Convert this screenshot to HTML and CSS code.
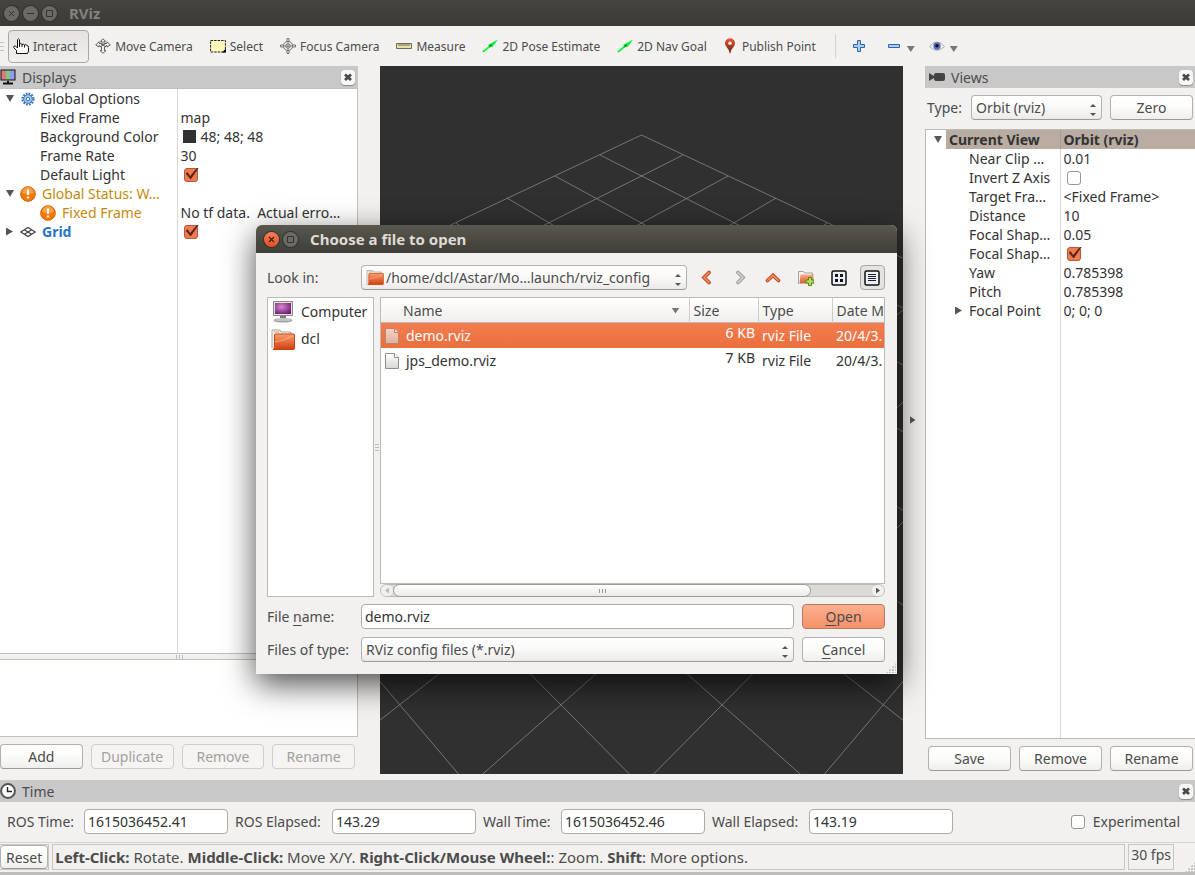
FILE: index.html
```html
<!DOCTYPE html>
<html lang="en">
<head>
<meta charset="utf-8">
<title>RViz</title>
<link rel="stylesheet" href="styles.css">
</head>
<body>
<svg class="defs" aria-hidden="true">
  <defs>
    <linearGradient id="orange" x1="0" y1="0" x2="0" y2="1"><stop offset="0" stop-color="#f8a070"/><stop offset="1" stop-color="#d0400c"/></linearGradient>
    <radialGradient id="purple" cx="40%" cy="35%" r="75%"><stop offset="0" stop-color="#d38ad0"/><stop offset="1" stop-color="#6d1670"/></radialGradient>
    <linearGradient id="pin" x1="0" y1="0" x2="0" y2="1"><stop offset="0" stop-color="#f0553a"/><stop offset="1" stop-color="#5a2208"/></linearGradient>
    <linearGradient id="paper" x1="0" y1="0" x2="0" y2="1"><stop offset="0" stop-color="#ffffff"/><stop offset="1" stop-color="#d6d5d3"/></linearGradient>
    <symbol id="folder" viewBox="0 0 24 22">
      <path d="M1 20V2h8l1 2h10v4" fill="#f6f4f2" stroke="#a8a29c"/>
      <path d="M3 4h5" stroke="#f09050"/>
      <path d="M3.500 7q0-1 1-1h18q1 0 1 1v13.500q0 1-1 1H2q1.500-1 1.500-3z" fill="url(#orange)" stroke="#c8430f"/>
      <path d="M4 14Q12 13 22 8" stroke="#ffc9a0" stroke-opacity=".6" fill="none"/>
    </symbol>
    <symbol id="warn" viewBox="0 0 16 16">
      <circle cx="8" cy="8" r="7.300" fill="#f57900" stroke="#cf5c00"/>
      <path d="M2 7a6 6 0 0 1 12 0q-6 2-12 0z" fill="#fcaf60" opacity=".7"/>
      <path d="M8 3.500v5.500M8 10.500v2" stroke="#fff" stroke-width="2.200"/>
    </symbol>
    <symbol id="file" viewBox="0 0 14 16">
      <path d="M.5.5h9l4 4v11H.5z" fill="url(#paper)" stroke="#92908c"/>
      <path d="M9.500.5v4h4" fill="#fff" stroke="#92908c"/>
    </symbol>
    <symbol id="arrow" viewBox="0 0 16 14"><path d="M.3 12.200L7 7 6 6 16 .5 10.500 8 9 7.500 1.500 13.500z" fill="#00f030"/><path d="M7 7l2-1.500 1 1-2 1.500z" fill="#066b12"/></symbol>
    <symbol id="cross" viewBox="0 0 14 14"><path d="M4 4.500l6 5.500M10 4.500L4 10" stroke="#4a4a46" stroke-width="2.800"/></symbol>
  </defs>
</svg>

<header class="titlebar">
  <button class="win-btn" aria-label="Close"><svg viewBox="0 0 15 15"><path d="M5 5l5 5M10 5l-5 5" stroke="#35342f"/></svg></button>
  <button class="win-btn" aria-label="Minimize"><svg viewBox="0 0 15 15"><path d="M4 7.500h7" stroke="#35342f"/></svg></button>
  <button class="win-btn" aria-label="Maximize"><svg viewBox="0 0 15 15"><path d="M4.500 4.500h6v6h-6z" stroke="#35342f" fill="none"/></svg></button>
  <h1>RViz</h1>
</header>

<nav class="toolbar">
  <span class="grip"></span>
  <button class="tool pressed"><svg viewBox="0 0 16 16"><path d="M3.500 15.500v-3L.7 9.500Q.5 7.500 2.500 8L4.500 10V1.700Q5.500 0 6.500 1.700V6Q8 5 9 6.500 10.500 5.500 11.500 7 13 6 14 7.500q1.500 0 1.500 2V13l-1 2.500z" fill="#fff" stroke="#111"/><path d="M6.500 6v3M9 6.500V9M11.500 7v2.500" stroke="#111"/></svg>Interact</button>
  <button class="tool"><svg viewBox="0 0 16 16"><path d="M8 .8L10.500 3.300H9V6l3-.8V3.700L15.300 7 12 9V7.500L9.500 9v3.500h1.500L8 15.300 5 12.500h1.500V9L4 7.500V9L.7 7 4 3.700v1.500L7 6V3.300H5.500z" fill="#eee" stroke="#555" stroke-width=".9"/><path d="M5 5l6 4M11 5L5 9" stroke="#555"/></svg>Move Camera</button>
  <button class="tool"><svg viewBox="0 0 16 14"><path d="M.6 1.500h14.800v11.500H.6z" fill="#fff7b8" stroke="#222" stroke-dasharray="2.500 1"/><path d="M12 13.500l4-4v4z" fill="#000"/></svg>Select</button>
  <button class="tool"><svg viewBox="0 0 16 16"><g fill="#eee" stroke="#666" stroke-width=".9"><path d="M7 .6h2v3.500H7zM7 12h2v3.500H7zM.6 7H4v2H.6zM12 7h3.500v2H12z"/><circle cx="8" cy="8" r="4.600"/></g><circle cx="8" cy="8" r="2.300" fill="none" stroke="#777"/><path d="M8 3v10M3 8h10" stroke="#777" stroke-width=".9"/></svg>Focus Camera</button>
  <button class="tool"><svg viewBox="0 0 16 16"><path d="M.5 5.500h15v5H.5z" fill="#e8e0a8" stroke="#706c58"/><path d="M3 6v2M5 6v2M7 6v2M9 6v2M11 6v2M13 6v2" stroke="#55513e" stroke-width=".8"/></svg>Measure</button>
  <button class="tool"><svg><use href="#arrow"/></svg>2D Pose Estimate</button>
  <button class="tool"><svg><use href="#arrow"/></svg>2D Nav Goal</button>
  <button class="tool pin"><svg viewBox="0 0 12 16"><path d="M6 16Q5.500 12 2.500 9 1 7.500 1 5.200a5 5 0 0 1 10 0Q11 7.500 9.500 9 6.500 12 6 16z" fill="url(#pin)"/><circle cx="6" cy="5.200" r="1.800" fill="#f4e6e2"/></svg>Publish Point</button>
  <span class="separator"></span>
  <button class="mini" aria-label="Add tool"><svg viewBox="0 0 12 12"><path d="M4.500.5h3v4h4v3h-4v4h-3v-4h-4v-3h4z" fill="#a9cdf0" stroke="#2f66ad"/></svg></button>
  <button class="mini drop" aria-label="Remove tool"><svg viewBox="0 0 12 12"><path d="M.5 4.500h11v3H.5z" fill="#a9cdf0" stroke="#2f66ad"/></svg><i class="caret"></i></button>
  <button class="mini drop eye" aria-label="Toolbar style"><svg viewBox="0 0 16 12"><path d="M.5 6.500Q8-2.500 15.500 6.500 8 14 .5 6.500z" fill="#f5f5f5" stroke="#aaa"/><circle cx="8" cy="6" r="3.700" fill="#5870b8"/><circle cx="8" cy="5.800" r="1.800" fill="#101030"/></svg><i class="caret"></i></button>
</nav>

<main class="workspace">
  <section class="dock displays">
    <header class="dock-title"><svg viewBox="0 0 16 16"><path d="M.5.5h15v11H.5z" fill="#111"/><path d="M1.500 1.500H6v9H1.500z" fill="#d87c80"/><path d="M6 1.500h4v9H6z" fill="#7fc985"/><path d="M10 1.500h4.500v9H10z" fill="#9a98e8"/><path d="M7 12h2v1.500h4V15.500H3v-2h4z" fill="#111"/></svg><h2>Displays</h2>
      <button class="close" aria-label="Close Displays"><svg><use href="#cross"/></svg></button></header>
    <div class="tree-box">
      <table class="tree">
        <colgroup><col class="name-col"><col></colgroup>
        <tbody>
        <tr><td><div class="cell"><i class="open"></i><svg class="ico" viewBox="0 0 16 16"><circle cx="8" cy="8" r="5.500" fill="none" stroke="#3c74bc" stroke-width="2.200" stroke-dasharray="1.700 1.180"/><circle cx="8" cy="8" r="4.300" fill="#a8c8ec" stroke="#3c74bc"/><circle cx="8" cy="8" r="1.700" fill="#fff" stroke="#3c74bc"/></svg>Global Options</div></td><td></td></tr>
        <tr><td class="child">Fixed Frame</td><td>map</td></tr>
        <tr><td class="child">Background Color</td><td><div class="cell"><i class="swatch"></i>48; 48; 48</div></td></tr>
        <tr><td class="child">Frame Rate</td><td>30</td></tr>
        <tr><td class="child"><label for="light">Default Light</label></td><td><input type="checkbox" id="light" checked></td></tr>
        <tr class="warning"><td><div class="cell"><i class="open"></i><svg class="ico"><use href="#warn"/></svg>Global Status: W…</div></td><td></td></tr>
        <tr class="warning"><td class="child"><div class="cell"><svg class="ico"><use href="#warn"/></svg>Fixed Frame</div></td><td class="plain">No tf data.&nbsp; Actual erro…</td></tr>
        <tr class="grid-item"><td><div class="cell"><i class="shut"></i><svg class="ico" viewBox="0 0 14 12"><path d="M7 2l6.300 4L7 10 .7 6zM3.800 4l6.400 4M10.200 4L3.800 8" fill="none" stroke="#444" stroke-width="1.100"/></svg><label for="grid">Grid</label></div></td><td><input type="checkbox" id="grid" checked></td></tr>
        <tr class="rest"><td></td><td></td></tr>
        </tbody>
      </table>
    </div>
    <div class="splitter"><i></i><i></i><i></i></div>
    <div class="help-box"></div>
    <div class="buttons">
      <button class="btn">Add</button><button class="btn" disabled>Duplicate</button><button class="btn" disabled>Remove</button><button class="btn" disabled>Rename</button>
    </div>
  </section>

  <section class="viewport" aria-label="3D view">
    <svg viewBox="0 0 523 708" preserveAspectRatio="xMidYMid slice">
      <path id="rows" fill="none" stroke="#868686" stroke-width=".8" d="M261.500 69L866 354M220 89L834 399M175 110L799 449M127 132L759 505M76 157L715 568M20 183L664 639M-41 212L607 720M-106 242.500L540 814M-178 276L463 924M-256.500 313L371 1053M-343 354L261.500 1209"/>
      <use href="#rows" transform="translate(523 0) scale(-1 1)"/>
    </svg>
  </section>

  <button class="collapse" aria-label="Hide right dock"><i class="shut"></i></button>

  <section class="dock views">
    <header class="dock-title"><svg viewBox="0 0 16 16"><path d="M0 4l5 3V5.500Q5 4 7 4h7q2 0 2 2v4q0 2-2 2H7q-2 0-2-2V9l-5 3z" fill="#444"/></svg><h2>Views</h2>
      <button class="close" aria-label="Close Views"><svg><use href="#cross"/></svg></button></header>
    <div class="type-row">
      <label for="type">Type:</label>
      <span class="combo"><select id="type"><option>Orbit (rviz)</option></select></span>
      <button class="btn">Zero</button>
    </div>
    <div class="tree-box framed">
      <table class="tree">
        <colgroup><col class="name-col"><col></colgroup>
        <tbody>
        <tr class="current"><td><div class="cell"><i class="open"></i>Current View</div></td><td>Orbit (rviz)</td></tr>
        <tr><td class="child">Near Clip …</td><td>0.01</td></tr>
        <tr><td class="child"><label for="invert">Invert Z Axis</label></td><td><input type="checkbox" id="invert"></td></tr>
        <tr><td class="child">Target Fra…</td><td>&lt;Fixed Frame&gt;</td></tr>
        <tr><td class="child">Distance</td><td>10</td></tr>
        <tr><td class="child">Focal Shap…</td><td>0.05</td></tr>
        <tr><td class="child"><label for="shape">Focal Shap…</label></td><td><input type="checkbox" id="shape" checked></td></tr>
        <tr><td class="child">Yaw</td><td>0.785398</td></tr>
        <tr><td class="child">Pitch</td><td>0.785398</td></tr>
        <tr><td class="point"><div class="cell"><i class="shut"></i>Focal Point</div></td><td>0; 0; 0</td></tr>
        <tr class="rest"><td></td><td></td></tr>
        </tbody>
      </table>
    </div>
    <div class="buttons">
      <button class="btn">Save</button><button class="btn">Remove</button><button class="btn">Rename</button>
    </div>
  </section>
</main>

<section class="time">
  <header class="dock-title"><svg viewBox="0 0 16 16"><circle cx="8" cy="8" r="6.900" fill="#fff" stroke="#555" stroke-width="2"/><path d="M7.500 4v4.500H12" fill="none" stroke="#222" stroke-width="1.400"/></svg><h2>Time</h2>
    <button class="close" aria-label="Close Time"><svg><use href="#cross"/></svg></button></header>
  <div class="time-row">
    <label for="ros">ROS Time:</label><input type="text" id="ros" value="1615036452.41">
    <label for="rosel">ROS Elapsed:</label><input type="text" id="rosel" value="143.29">
    <label for="wall">Wall Time:</label><input type="text" id="wall" value="1615036452.46">
    <label for="wallel">Wall Elapsed:</label><input type="text" id="wallel" value="143.19">
    <label class="experimental"><input type="checkbox">Experimental</label>
  </div>
</section>

<footer class="status">
  <div class="slot"><button class="btn">Reset</button></div>
  <p class="slot hint"><b>Left-Click:</b> Rotate. <b>Middle-Click:</b> Move X/Y. <b>Right-Click/Mouse Wheel:</b>: Zoom. <b>Shift</b>: More options.</p>
  <div class="slot fps">30 fps</div>
  <span class="size-grip"></span>
</footer>
<div class="edge"></div>

<div class="dialog" role="dialog" aria-labelledby="dlg-title">
  <header class="dialog-title">
    <button class="win-btn red" aria-label="Close"><svg viewBox="0 0 15 15"><path d="M5 5l5 5M10 5l-5 5" stroke="#4a1b0c" stroke-width="1.200"/></svg></button>
    <button class="win-btn" aria-label="Maximize"><svg viewBox="0 0 15 15"><path d="M4.500 4.500h6v6h-6z" stroke="#35342f" fill="none"/></svg></button>
    <h2 id="dlg-title">Choose a file to open</h2>
  </header>
  <div class="dialog-body">
    <div class="look">
      <label for="look">Look in:</label>
      <span class="combo path"><svg><use href="#folder"/></svg><select id="look"><option>/home/dcl/Astar/Mo…launch/rviz_config</option></select></span>
      <div class="nav">
        <button aria-label="Back"><svg viewBox="0 0 16 16"><path d="M10 2.500L5 7.500l5 5" fill="none" stroke="#b83c14" stroke-width="3.600" stroke-linecap="round"/><path d="M10 2.500L5 7.500l5 5" fill="none" stroke="#f0865a" stroke-width="1.800" stroke-linecap="round"/></svg></button>
        <button aria-label="Forward" disabled><svg viewBox="0 0 16 16"><path d="M6 2.500l5 5-5 5" fill="none" stroke="#989694" stroke-width="3.600" stroke-linecap="round"/><path d="M6 2.500l5 5-5 5" fill="none" stroke="#cfcdcb" stroke-width="1.800" stroke-linecap="round"/></svg></button>
        <button aria-label="Parent directory"><svg viewBox="0 0 16 16"><path d="M2.500 10.500l5.500-5 5.500 5" fill="none" stroke="#b83c14" stroke-width="3.600" stroke-linecap="round"/><path d="M2.500 10.500l5.500-5 5.500 5" fill="none" stroke="#f0865a" stroke-width="1.800" stroke-linecap="round"/></svg></button>
        <button aria-label="Create new folder"><svg viewBox="0 0 16 16"><path d="M.5 14V1.500h5l1 1.500h8v4" fill="#f6f4f2" stroke="#a8a29c"/><path d="M2.500 4.500h13v9h-14z" fill="url(#orange)" opacity=".85"/><path d="M10.500 7.500h3v2.500H16v3h-2.500v2.500h-3V13H8v-3h2.500z" fill="#b6dc5a" stroke="#4e8a10"/></svg></button>
        <button aria-label="List view"><svg viewBox="0 0 16 16"><rect x="1" y="1" width="14" height="14" rx="1.500" fill="#e9f1fb" stroke="#111" stroke-width="1.500"/><path d="M4 4h3v3H4zM9 4h3v3H9zM4 9h3v3H4zM9 9h3v3H9z" fill="#111"/></svg></button>
        <button class="active" aria-label="Detail view"><svg viewBox="0 0 16 16"><rect x="1" y="1" width="14" height="14" rx="1.500" fill="#e9f1fb" stroke="#111" stroke-width="1.500"/><path d="M4 4.500h8M4 6.500h8M4 8.500h8M4 10.500h8" stroke="#222"/></svg></button>
      </div>
    </div>
    <div class="browser">
      <ul class="places">
        <li><svg viewBox="0 0 24 22"><path d="M2.500.5h19v14h-19z" fill="#e2e0de" stroke="#8b8986"/><path d="M4 2h16v11H4z" fill="url(#purple)"/><path d="M9 15h6v2H9z" fill="#777"/><ellipse cx="12" cy="19.500" rx="9.500" ry="2" fill="#aaa"/><path d="M4 18h16v2H4z" fill="#ddd" stroke="#888" stroke-width=".6"/></svg>Computer</li>
        <li><svg><use href="#folder"/></svg>dcl</li>
      </ul>
      <div class="v-split"><i></i><i></i><i></i></div>
      <div class="listing">
        <div class="files-box">
          <table class="files">
            <colgroup><col><col class="c-size"><col class="c-type"><col class="c-date"></colgroup>
            <thead><tr><th><div class="sort">Name<i class="caret"></i></div></th><th>Size</th><th>Type</th><th>Date M</th></tr></thead>
            <tbody>
              <tr class="selected"><td><div class="cell"><svg><use href="#file"/></svg>demo.rviz</div></td><td class="size">6 KB</td><td>rviz File</td><td>20/4/3.</td></tr>
              <tr><td><div class="cell"><svg><use href="#file"/></svg>jps_demo.rviz</div></td><td class="size">7 KB</td><td>rviz File</td><td>20/4/3.</td></tr>
            </tbody>
          </table>
        </div>
        <div class="scrollbar"><span class="step left"></span><span class="thumb"><i></i><i></i><i></i></span><span class="track"></span><span class="step right"></span></div>
      </div>
    </div>
    <div class="form">
      <label for="fname">File <u>n</u>ame:</label><input type="text" id="fname" value="demo.rviz"><button class="btn primary"><u>O</u>pen</button>
      <label for="ftype">Files of type:</label><span class="combo"><select id="ftype"><option>RViz config files (*.rviz)</option></select></span><button class="btn"><u>C</u>ancel</button>
    </div>
  </div>
  <span class="size-grip"></span>
</div>
</body>
</html>
```

FILE: styles.css
```css
* { box-sizing: border-box; }

body {
  margin: 0;
  height: 100vh;
  display: flex;
  flex-direction: column;
  overflow: hidden;
  position: relative;
  background: #f2f1ef;
  color: #4c4c4c;
  font: 14px/19px "Noto Sans", "Open Sans", sans-serif;
}

h1, h2, p, ul { margin: 0; padding: 0; }
h1, h2 { font-size: 14px; line-height: 19px; font-weight: 400; }
button, input, select { font: inherit; color: inherit; }
button { padding: 0; border: 0; background: none; }
svg { display: block; flex: none; }
i { display: block; flex: none; }
u { text-underline-offset: 3px; text-decoration-thickness: 1px; }
.defs { position: absolute; width: 0; height: 0; }

/* window frame */
.titlebar {
  height: 26px;
  flex: none;
  display: flex;
  align-items: center;
  gap: 4px;
  padding-left: 4px;
  background: linear-gradient(#45443f, #3b3a36);
}
.titlebar h1 { margin-left: 8px; font-size: 15px; font-weight: 700; color: #84827c; }
.win-btn {
  width: 15px;
  height: 15px;
  border-radius: 50%;
  background: #6b6a64;
  box-shadow: 0 0 0 1px #33322e;
}
.win-btn.red { background: linear-gradient(#f58059, #e2501f); }

/* toolbar */
.toolbar {
  height: 40px;
  flex: none;
  display: flex;
  align-items: center;
  font-size: 12px;
}
.grip {
  width: 4px;
  height: 9px;
  margin-right: 4px;
  background: repeating-linear-gradient(#c4c3c0 0 1px, transparent 1px 4px);
}
.tool {
  height: 33px;
  display: flex;
  align-items: center;
  gap: 4px;
  padding: 0 11px 0 6px;
  white-space: nowrap;
}
.tool svg { width: 16px; height: 16px; }
.tool.pin svg { width: 12px; }
.tool.pin { gap: 6px; }
.tool.pressed {
  padding: 0 11px 0 4px;
  border: 1px solid #a9a7a2;
  border-radius: 4px;
  background: linear-gradient(#e4e3e0, #f0efed);
}
.separator { width: 1px; height: 24px; margin: 0 17px 0 8px; background: #d5d3d0; }
.mini { display: flex; align-items: center; margin-right: 23px; }
.mini svg { width: 12px; height: 12px; }
.mini.drop { gap: 7px; margin-right: 14px; }
.mini.eye { gap: 5px; }
.mini.eye svg { width: 16px; }
.mini .caret { margin-top: 6px; }
.caret {
  width: 8px;
  height: 6px;
  background: #777;
  clip-path: polygon(0 0, 100% 0, 50% 100%);
}

/* docks */
.workspace { flex: 1; min-height: 0; display: flex; padding-bottom: 6px; }
.dock { display: flex; flex-direction: column; min-height: 0; }
.displays { width: 358px; margin-right: 22px; }
.views { width: 270px; }
.dock-title {
  height: 22px;
  flex: none;
  display: flex;
  align-items: center;
  gap: 6px;
  padding-right: 2px;
  background: #c8c8c8;
}
.dock-title > svg { width: 16px; height: 16px; }
.views .dock-title { padding-left: 4px; }
.dock-title h2 { flex: 1; }
.close {
  width: 14px;
  height: 15px;
  border-radius: 4px;
  background: #f7f7f6;
  box-shadow: 0 1px 1px #888;
}
.close svg { width: 14px; height: 14px; }
.displays .close { margin-right: 1px; }

.tree-box { flex: 1; min-height: 0; background: #fff; border-right: 1px solid #c2c0bc; border-top: 1px solid #c2c0bc; color: #333; }
.tree-box.framed { border: 1px solid #bcbab6; border-right: 0; }
.tree { width: 100%; height: 100%; table-layout: fixed; border-collapse: collapse; }
.tree tr { height: 19px; }
.tree .rest { height: auto; }
.name-col { width: 177px; }
.views .name-col { width: 134px; }
.tree td { padding: 0 0 0 3px; white-space: nowrap; overflow: hidden; line-height: 19px; }
.tree td:first-child { border-right: 1px solid #d9d9d9; padding-left: 6px; }
.tree td:first-child.child { padding-left: 40px; }
.views .tree td:first-child { padding-left: 8px; }
.views .tree td:first-child.child { padding-left: 43px; }
.views .tree td:first-child.point { padding-left: 29px; }
.cell { display: flex; align-items: center; height: 19px; }
.open { width: 8px; height: 7px; background: #555; clip-path: polygon(0 0, 100% 0, 50% 100%); }
.shut { width: 7px; height: 8px; background: #555; clip-path: polygon(0 0, 100% 50%, 0 100%); }
.ico { width: 16px; height: 16px; margin: 0 6px; }
.displays .shut { margin-right: 1px; }
.child .ico { margin-left: 0; }
.swatch { width: 13px; height: 13px; margin: 0 5px 0 2px; background: #303030; }
.warning { color: #c4890d; }
.warning .plain { color: #333; }
.grid-item label { color: #2674c8; font-weight: 700; }
.current { font-weight: 700; background: linear-gradient(90deg, #fff 20px, #b9aca2 20px); }
.current .open { margin-right: 7px; }
.tree .current td:first-child { border-color: #a89c93; }
.point .shut { margin-right: 7px; }

input[type="checkbox"] {
  appearance: none;
  position: relative;
  display: block;
  width: 14px;
  height: 14px;
  margin: 0 0 0 3px;
  border: 1px solid #999791;
  border-radius: 3px;
  background: #fff;
}
input[type="checkbox"]:checked { background: #f27a50; border-color: #b25a3a; }
input[type="checkbox"]:checked::before {
  content: "";
  position: absolute;
  left: 1px;
  top: -1px;
  width: 13px;
  height: 12px;
  background: #55281a;
  clip-path: polygon(0 50%, 16% 40%, 36% 70%, 90% 0, 100% 6%, 40% 100%);
}

.splitter { height: 7px; flex: none; display: flex; justify-content: center; align-items: center; gap: 2px; border: solid #c2c0bc; border-width: 1px 0; }
.splitter i { width: 1px; height: 4px; background: #bbb; }
.help-box { height: 77px; flex: none; background: #fff; border: solid #c2c0bc; border-width: 0 1px 1px 0; }
.buttons { display: flex; flex: none; gap: 8px; padding: 7px 2px 3px 3px; }
.displays .buttons { padding: 7px 3px 5px 0; }
.buttons .btn { flex: 1; }

.btn {
  height: 25px;
  border: 1px solid #b3b1ac;
  border-bottom-color: #9c9a95;
  border-radius: 4px;
  background: linear-gradient(#fff, #fbfbfa 50%, #efeeec);
}
.btn:disabled { color: #a3a19e; border-color: #d0cecb; background: #f5f4f3; }
.btn.primary { background: linear-gradient(#fdb08f, #f5906a); border-color: #b47a64; }

.viewport { flex: 1; min-width: 0; background: #303030; }
.viewport svg { width: 100%; height: 100%; }
.collapse { width: 22px; display: flex; align-items: center; justify-content: center; padding-right: 3px; }
.collapse .shut { width: 6px; }

.type-row { display: grid; grid-template-columns: 36px 1fr 83px; gap: 8px; align-items: center; padding: 7px 2px 9px; }

.combo { position: relative; display: block; }
.combo select {
  appearance: none;
  display: block;
  width: 100%;
  height: 25px;
  padding: 0 20px 0 4px;
  border: 1px solid #b3b1ac;
  border-bottom-color: #9c9a95;
  border-radius: 4px;
  background: linear-gradient(#fff, #f9f9f8 50%, #eceae8);
}
.combo::before, .combo::after {
  content: "";
  position: absolute;
  right: 6px;
  width: 6px;
  height: 3px;
  background: #555;
  pointer-events: none;
}
.combo::before { top: 9px; clip-path: polygon(50% 0, 100% 100%, 0 100%); }
.combo::after { bottom: 4px; clip-path: polygon(0 0, 100% 0, 50% 100%); }
.path select { padding-left: 24px; }
.path svg { position: absolute; left: 5px; top: 4px; width: 18px; height: 16px; }

input[type="text"] {
  width: 100%;
  height: 25px;
  padding: 0 3px;
  border: 1px solid #aeaca7;
  border-radius: 4px;
  background: #fff;
  color: #333;
}

/* time panel and status bar */
.time-row {
  display: grid;
  grid-template-columns: 70px 144px 90px 144px 71px 144px 90px 144px 1fr;
  gap: 7px;
  align-items: center;
  padding: 7px 15px 8px 7px;
  white-space: nowrap;
}
.experimental { display: flex; gap: 8px; justify-content: flex-end; align-items: center; }
.status { height: 30px; flex: none; display: flex; gap: 3px; padding-top: 1px; border-top: 1px solid #d6d4d1; }
.slot { border: 1px solid #c8c6c3; height: 26px; white-space: nowrap; }
.status .btn { height: 24px; padding: 0 5px; }
.status .slot:first-child { border-left: 0; }
.hint { flex: 1; padding: 3px 2px; overflow: hidden; font-size: 15px; }
.fps { padding: 0 2px; }
.status .size-grip { align-self: flex-end; margin-left: 8px; }
.size-grip {
  width: 10px;
  height: 10px;
  background: radial-gradient(circle at 1px 1px, #c4c2be 1px, transparent 1px) 0 0 / 3px 3px;
  clip-path: polygon(100% 0, 100% 100%, 0 100%);
}
.edge { height: 3px; flex: none; background: #bebdbb; }

/* file dialog */
.dialog {
  position: absolute;
  left: 256px;
  top: 225px;
  width: 641px;
  border-radius: 6px 6px 0 0;
  background: #f2f1ef;
  box-shadow: 0 10px 32px rgba(0, 0, 0, .7);
}
.dialog > .size-grip { position: absolute; right: 1px; bottom: 1px; }
.dialog-title {
  height: 28px;
  display: flex;
  align-items: center;
  gap: 4px;
  padding-left: 8px;
  border-radius: 6px 6px 0 0;
  background: linear-gradient(#5a574e, #3e3d38);
}
.dialog-title h2 { margin-left: 8px; font-size: 15px; font-weight: 700; color: #dfdbd2; }
.dialog-body { padding: 12px 12px 12px 11px; display: flex; flex-direction: column; }
.look { display: grid; grid-template-columns: 94px 326px 1fr; align-items: center; }
.nav { display: flex; justify-content: space-between; padding-left: 7px; }
.nav button { width: 25px; height: 25px; display: grid; place-items: center; border: 1px solid transparent; border-radius: 4px; }
.nav svg { width: 16px; height: 16px; }
.nav .active { border-color: #a9a7a2; background: #e4e3e0; }
.browser { display: flex; height: 300px; margin: 7px 0; }
.places { width: 107px; border: 1px solid #bcbab6; background: #fff; list-style: none; color: #333; }
.places li { display: flex; align-items: center; gap: 6px; height: 27px; padding-left: 3px; }
.places svg { width: 24px; height: 22px; }
.v-split { width: 6px; display: flex; flex-direction: column; justify-content: center; align-items: center; gap: 2px; }
.v-split i { width: 4px; height: 1px; background: #bbb; }
.listing { flex: 1; min-width: 0; display: flex; flex-direction: column; }
.files-box { flex: 1; border: 1px solid #bcbab6; background: #fff; overflow: hidden; }
.files { width: 100%; table-layout: fixed; border-collapse: collapse; color: #333; }
.c-size { width: 69px; }
.c-type { width: 74px; }
.c-date { width: 52px; }
.files th, .files td { height: 25px; padding: 0 0 0 4px; text-align: left; font-weight: 400; white-space: nowrap; overflow: hidden; }
.files th { color: #4c4c4c; border-left: 1px solid #cfcdca; background: linear-gradient(#fff, #efeeec); box-shadow: inset 0 -1px #bcbab6; }
.files th:first-child { border-left: 0; padding-left: 22px; }
.sort { display: flex; align-items: center; justify-content: space-between; padding-right: 9px; }
.files .cell { gap: 7px; }
.files .cell svg { width: 14px; height: 16px; }
.files td.size { text-align: right; padding: 0 3px 6px 0; }
.selected { color: #fff; background: linear-gradient(#f47c50, #ea6f3d); }
.selected svg { opacity: .65; }
.scrollbar { height: 13px; display: flex; border: 1px solid #bcbab6; border-radius: 7px; background: #dcdad7; }
.step { width: 12px; background: #f2f1ef; border-radius: 6px; display: grid; place-items: center; }
.step::before { content: ""; width: 4px; height: 6px; background: #555; clip-path: polygon(0 0, 100% 50%, 0 100%); }
.step.left::before { background: #bbb; clip-path: polygon(100% 0, 0 50%, 100% 100%); }
.thumb { flex: 418; display: flex; align-items: center; justify-content: center; gap: 2px; margin: -1px 0; border: 1px solid #9c9a95; border-radius: 7px; background: linear-gradient(#fff, #eceae8); }
.thumb i { width: 1px; height: 4px; background: #999; }
.track { flex: 61; }
.form { display: grid; grid-template-columns: 94px 1fr 91px; row-gap: 8px; align-items: center; }
.form .btn { margin-left: 8px; }
```
